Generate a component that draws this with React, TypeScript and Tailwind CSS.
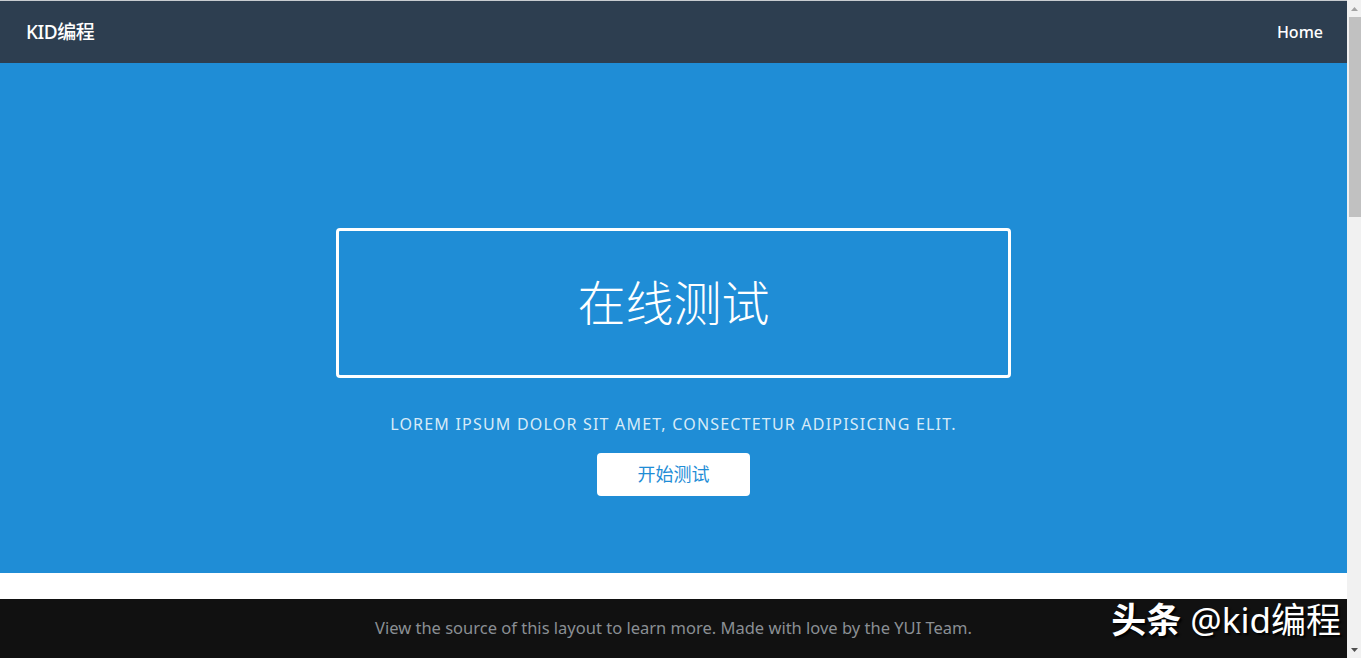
import React from 'react';

const font = { fontFamily: '"Noto Sans", "Noto Sans CJK SC", sans-serif' };

function Scrollbar() {
  return (
    <div className="w-[14px] shrink-0 bg-[#f1f1f1] flex flex-col items-center">
      <div className="h-[17px] w-full flex items-center justify-center">
        <svg width="7" height="4" viewBox="0 0 7 4">
          <path d="M0 4 L3.5 0 L7 4 Z" fill="#a3a3a3" />
        </svg>
      </div>
      <div className="h-[200px] w-[12px] ml-[2px] bg-[#c1c1c1]" />
      <div className="flex-1" />
      <div className="h-[17px] w-full flex items-center justify-center">
        <svg width="7" height="4" viewBox="0 0 7 4">
          <path d="M0 0 L3.5 4 L7 0 Z" fill="#505050" />
        </svg>
      </div>
    </div>
  );
}

export default function App() {
  return (
    <div className="flex h-[658px] w-full overflow-hidden" style={font}>
      <div className="flex-1 flex flex-col">
        {/* Header */}
        <div className="h-px bg-[#c8ccd0]" />
        <header className="h-[62px] bg-[#2d3e50] flex items-center justify-between pl-[26px] pr-[24px]">
          <span className="text-white text-[19px] font-medium tracking-tight">KID编程</span>
          <a className="text-white text-[16px] font-medium -mt-[1px]">Home</a>
        </header>

        {/* Hero */}
        <section className="h-[510px] bg-[#1f8dd6] flex flex-col items-center pt-[165px]">
          <div className="w-[675px] h-[150px] border-[3px] border-white rounded-[4px] flex items-center justify-center">
            <h1 className="text-white text-[48px] font-light leading-none -mt-[1px]">在线测试</h1>
          </div>
          <p className="mt-[34px] text-[#d7ebf8] text-[16px] uppercase tracking-[0.075em]">
            Lorem ipsum dolor sit amet, consectetur adipisicing elit.
          </p>
          <button className="mt-[17px] w-[153px] h-[43px] bg-white rounded-[4px] text-[#1f8dd6] text-[18px]">
            开始测试
          </button>
        </section>

        <div className="h-[26px] bg-white" />

        {/* Footer */}
        <footer className="relative flex-1 bg-[#111111] flex items-center justify-center">
          <p className="text-[#8a8f94] text-[16.5px]">
            View the source of this layout to learn more. Made with love by the YUI Team.
          </p>
          <span
            className="absolute right-[6px] top-[0px] text-white text-[35px] font-bold leading-[42px] whitespace-nowrap"
            style={{ textShadow: '2px 2px 2px #000' }}
          >
            头条 <span className="font-normal">@kid编程</span>
          </span>
        </footer>
      </div>
      <Scrollbar />
    </div>
  );
}
